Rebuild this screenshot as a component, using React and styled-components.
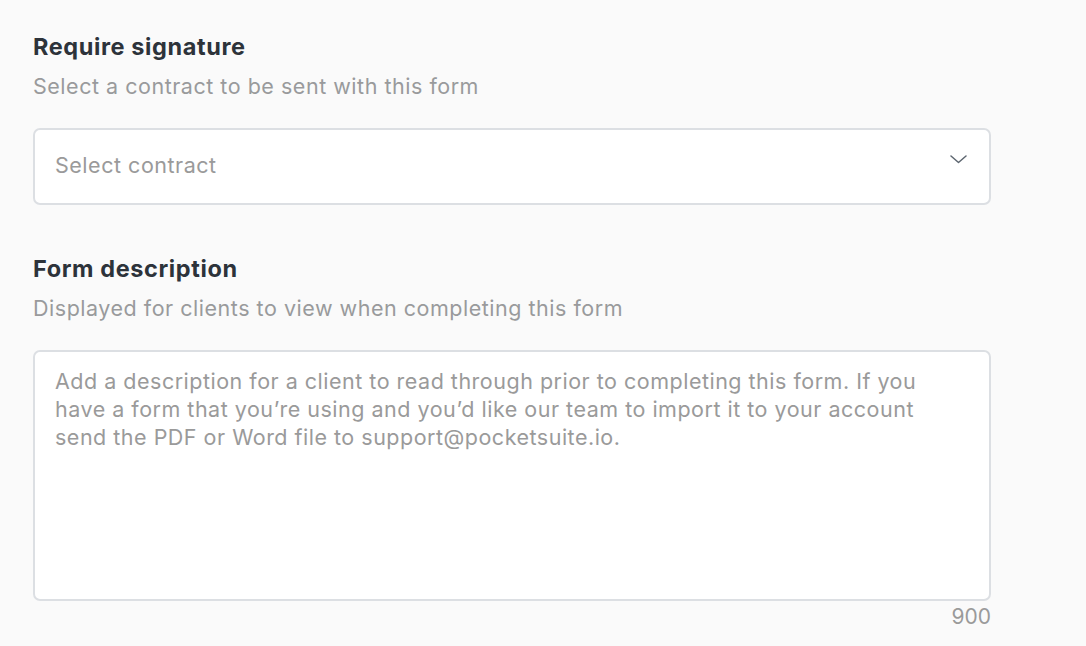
import React from "react";
import styled, { createGlobalStyle } from "styled-components";

const GlobalStyle = createGlobalStyle`
  html, body {
    margin: 0;
    padding: 0;
    background: #fafafa;
  }
  body {
    font-family: Inter, "Noto Sans", sans-serif;
    -webkit-font-smoothing: antialiased;
  }
`;

const description =
  "Add a description for a client to read through prior to completing this form. If you have a form that you\u2019re using and you\u2019d like our team to import it to your account send the PDF or Word file to support@pocketsuite.io.";

export default function App() {
  return (
    <>
      <GlobalStyle />
      <Page>
        <Field>
          <Label>Require signature</Label>
          <Hint>Select a contract to be sent with this form</Hint>
          <SelectBox>
            <Placeholder>Select contract</Placeholder>
            <Chevron width="17" height="9" viewBox="0 0 17 9">
              <path d="M1 1 L8.5 7.5 L16 1" />
            </Chevron>
          </SelectBox>
        </Field>

        <Field>
          <Label>Form description</Label>
          <Hint>Displayed for clients to view when completing this form</Hint>
          <TextArea placeholder={description} maxLength={900} />
          <Counter>900</Counter>
        </Field>
      </Page>
    </>
  );
}

const Page = styled.div`
  width: 958px;
  padding: 33px 0 0 33px;
  display: flex;
  flex-direction: column;
  gap: 50px;
`;

const Field = styled.div`
  display: flex;
  flex-direction: column;
`;

const Label = styled.h3`
  margin: 0;
  font-size: 23.5px;
  line-height: 28px;
  font-weight: 700;
  letter-spacing: 0.6px;
  color: #2d333a;
`;

const Hint = styled.p`
  margin: 11px 0 28px;
  font-size: 21.5px;
  line-height: 28px;
  color: #999a9c;
  letter-spacing: 0.52px;
`;

const SelectBox = styled.div`
  box-sizing: border-box;
  height: 77px;
  display: flex;
  align-items: center;
  justify-content: space-between;
  padding: 0 22px 0 20px;
  background: #fff;
  border: 2px solid #dcdfe3;
  border-radius: 7px;
  cursor: pointer;
`;

const Placeholder = styled.span`
  margin-bottom: 4px;
  font-size: 21.5px;
  line-height: 28px;
  color: #9a9a9a;
  letter-spacing: 0.52px;
`;

const Chevron = styled.svg`
  margin-bottom: 15px;
  fill: none;
  stroke: #5d6670;
  stroke-width: 1.5;
  stroke-linecap: round;
  stroke-linejoin: round;
`;

const TextArea = styled.textarea`
  box-sizing: border-box;
  display: block;
  width: 100%;
  height: 251px;
  margin: 0;
  padding: 15px 40px 15px 20px;
  background: #fff;
  border: 2px solid #dcdfe3;
  border-radius: 7px;
  resize: none;
  outline: none;
  font-family: Inter, "Noto Sans", sans-serif;
  font-size: 21.5px;
  line-height: 28px;
  color: #2d333a;
  letter-spacing: 0.5px;

  &::placeholder {
    color: #9a9a9a;
  }
`;

const Counter = styled.div`
  margin-top: 2px;
  text-align: right;
  font-size: 21px;
  line-height: 28px;
  color: #9a9a9a;
`;
